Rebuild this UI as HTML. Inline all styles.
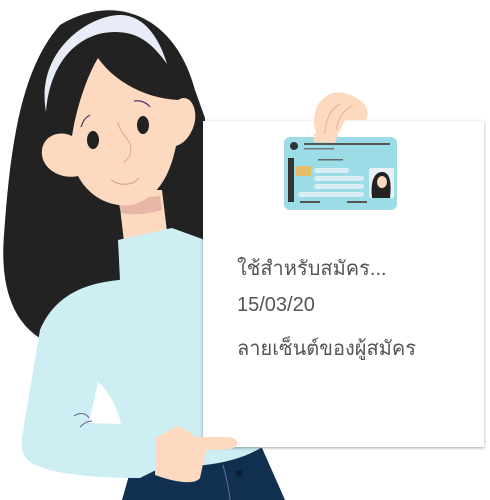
<!DOCTYPE html>
<html><head><meta charset="utf-8"><style>
html,body{margin:0;padding:0;background:#fff;width:490px;height:500px;overflow:hidden}
.paper{position:absolute;left:203px;top:121px;width:281px;height:326px;background:#fff;box-shadow:0 1px 3px rgba(0,0,0,.35)}
.t{position:absolute;left:237px;font-family:"Liberation Sans","Noto Sans CJK SC",sans-serif;font-size:20px;color:#555;white-space:nowrap}
</style></head><body>
<svg width="490" height="500" style="position:absolute;left:0;top:0">
<path d="M60,25 C115,-8 175,15 195,90 L205,118 L205,245 L70,300 L47,342 C12,325 0,285 4,235 C10,150 20,70 60,25 Z" fill="#222"/>
<path d="M46,112 C35,50 90,15 120,15 C145,15 160,40 167,64 C150,40 135,32 115,32 C80,32 50,60 46,112 Z" fill="#e8ecf6"/>
<path d="M118,190 L162,190 L168,240 L124,242 Z" fill="#fdd9bf"/>
<path d="M118,200 L160,196 L162,210 C145,215 130,215 121,213 Z" fill="#e7b6a6"/>
<path d="M98,58 C115,82 145,98 178,100 C190,92 200,110 193,128 C188,140 182,144 176,146 C170,175 158,198 132,205 C108,208 88,195 78,176 C60,180 40,168 42,150 C44,135 60,130 72,136 C76,110 86,78 98,58 Z" fill="#fdd9bf"/>
<ellipse cx="93" cy="140" rx="6" ry="9" fill="#222"/>
<ellipse cx="143" cy="125" rx="6" ry="9" fill="#222"/>
<path d="M81,127 C83,120 86,117 90,115" stroke="#5a2d7a" stroke-width="1.2" fill="none"/>
<path d="M134,101 C140,100 146,102 150,107" stroke="#5a2d7a" stroke-width="1.2" fill="none"/>
<path d="M118,122 C120,135 132,140 131,150 C130,158 126,161 123,162" stroke="#d9a890" stroke-width="1" fill="none"/>
<path d="M111,180 C120,186 132,186 139,178" stroke="#d9a890" stroke-width="1.2" fill="none"/>
<path d="M122,500 L132,465 L262,448 L285,500 Z" fill="#11304f"/>
<path d="M223,465 C227,480 229,490 230,500" stroke="#6a6aa0" stroke-width="1" fill="none"/>
<circle cx="239" cy="473" r="3" fill="#0a1a2a"/>
<path d="M118,240 L172,228 L205,240 L205,447 L262,447 C250,455 230,462 205,465 L160,468 L140,478 C100,478 50,475 30,462 C18,452 22,440 24,425 L40,330 C55,295 85,283 120,280 Z" fill="#cdeef3"/>
<path d="M98,382 C110,392 118,410 121,424 L89,423 Z" fill="#fff"/>
<path d="M74,416 C80,412 86,413 89,418 M80,427 C84,423 88,421 92,421" stroke="#6a5a90" stroke-width="1" fill="none"/>
</svg>
<div class="paper"></div>
<svg width="490" height="500" style="position:absolute;left:0;top:0">
<path d="M155,438 C165,434 172,428 178,426 C184,427 190,434 196,437 L228,437 C240,438 240,447 230,449 L206,450 L200,478 C196,484 180,484 155,475 Z" fill="#fdd9bf"/>
<path d="M314,124 C314,110 318,100 330,94 C340,90 352,94 362,102 C368,106 369,115 366,120 L345,120 L335,140 L318,142 Z" fill="#fdd9bf"/>
<path d="M325,135 C325,120 330,110 340,104 M336,130 C338,118 344,110 352,106" stroke="#d9a890" stroke-width="0.8" fill="none"/>
<rect x="284" y="137" width="113" height="73" rx="6" fill="#9bdce6"/>
<path d="M314,134 L314,142 L335,143 L338,134 Z" fill="#fdd9bf"/>
<circle cx="294" cy="146" r="4" fill="#333"/>
<rect x="304" y="143" width="86" height="2" fill="#555"/>
<rect x="304" y="148" width="30" height="1.5" fill="#777"/>
<rect x="318" y="159" width="25" height="1.5" fill="#666"/>
<rect x="288" y="158" width="6" height="44" fill="#333"/>
<rect x="296" y="166" width="15" height="10" fill="#e3bd6a"/>
<rect x="314" y="168" width="35" height="5" rx="2.5" fill="#d9eef2"/>
<rect x="314" y="176" width="50" height="5" rx="2.5" fill="#d9eef2"/>
<rect x="314" y="184" width="50" height="5" rx="2.5" fill="#d9eef2"/>
<rect x="298" y="192" width="66" height="5" rx="2.5" fill="#d9eef2"/>
<rect x="300" y="201" width="20" height="2" fill="#555"/>
<rect x="347" y="201" width="20" height="2" fill="#555"/>
<rect x="369" y="168" width="25" height="30" rx="2" fill="#e8f2f5"/>
<path d="M372,198 C370,180 375,172 382,172 C389,172 392,180 390,198 Z" fill="#222"/>
<ellipse cx="382" cy="182" rx="5" ry="6" fill="#fdd9bf"/>
</svg>
<div class="t" style="top:252px">ใช้สำหรับสมัคร...</div>
<div class="t" style="top:294px">15/03/20</div>
<div class="t" style="top:332px">ลายเซ็นต์ของผู้สมัคร</div>
</body></html>
